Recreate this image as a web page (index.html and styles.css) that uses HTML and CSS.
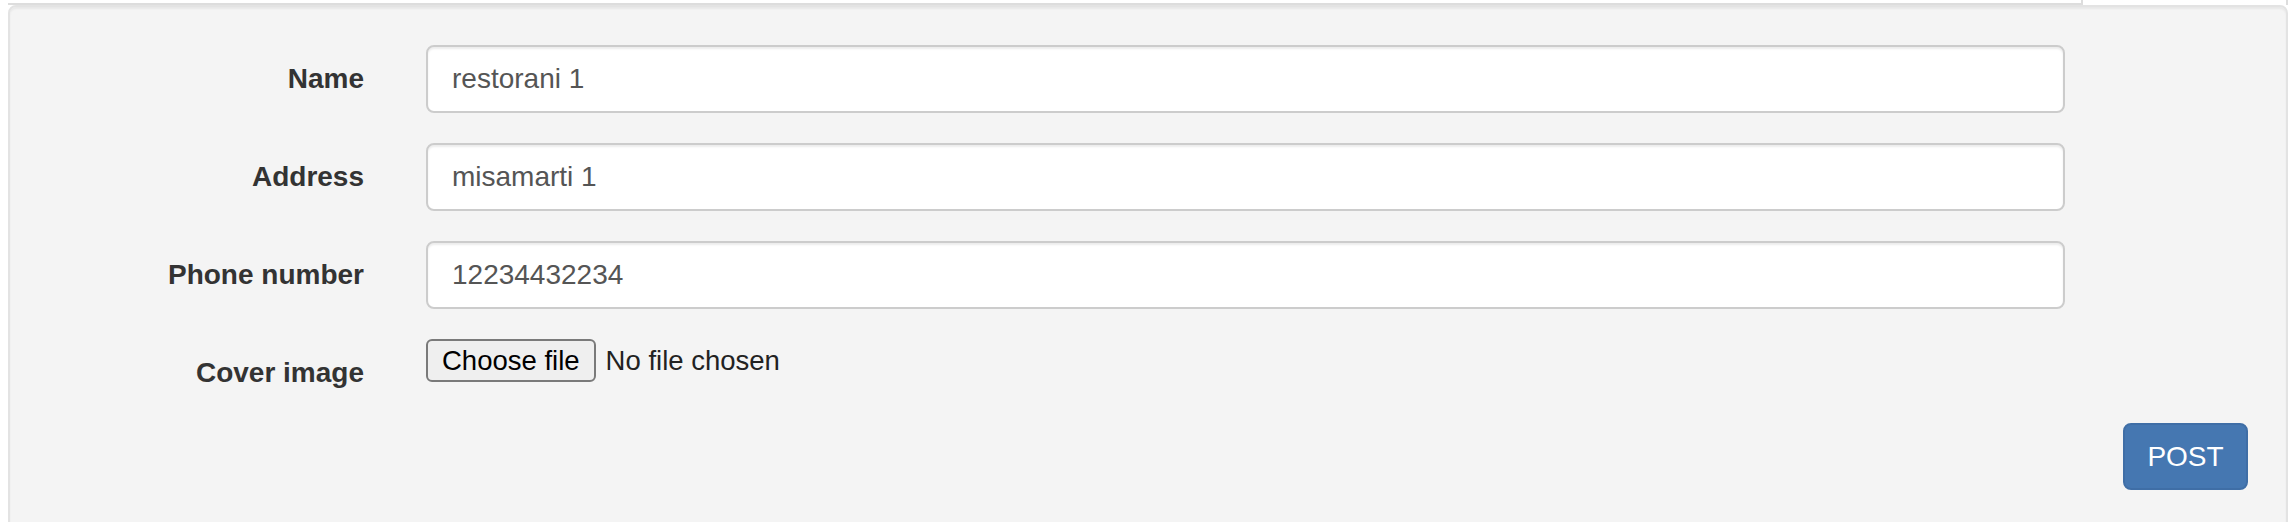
FILE: index.html
```html
<!DOCTYPE html>
<html lang="en">
<head>
<meta charset="utf-8">
<title>New restaurant</title>
<link rel="stylesheet" href="styles.css">
</head>
<body>
  <div class="tabs">
    <div class="tabs-line"></div>
    <div class="tab-active"></div>
  </div>
  <div class="well">
    <form class="form">
      <div class="form-row">
        <label class="form-label" for="name">Name</label>
        <input class="form-input" id="name" type="text" value="restorani 1">
      </div>
      <div class="form-row">
        <label class="form-label" for="address">Address</label>
        <input class="form-input" id="address" type="text" value="misamarti 1">
      </div>
      <div class="form-row">
        <label class="form-label" for="phone">Phone number</label>
        <input class="form-input" id="phone" type="text" value="12234432234">
      </div>
      <div class="form-row">
        <span class="form-label">Cover image</span>
        <label class="file">
          <span class="file-btn">Choose file</span>
          <span class="file-name">No file chosen</span>
          <input class="file-input" type="file">
        </label>
      </div>
      <div class="form-actions">
        <button class="btn-primary" type="button">POST</button>
      </div>
    </form>
  </div>
</body>
</html>
```

FILE: styles.css
```css
html, body {
  margin: 0;
  padding: 0;
  background: #ffffff;
}

body {
  margin: 0 8px;
  font-family: "Liberation Sans", Arial, Helvetica, sans-serif;
  color: #333333;
}

.tabs {
  display: flex;
  height: 5px;
}

.tabs-line {
  flex: 1;
  border-bottom: 2px solid #dddddd;
  border-right: 2px solid #dddddd;
}

.tab-active {
  width: 203px;
  background: #ffffff;
  border-right: 2px solid #dddddd;
}

.well {
  background: #f4f4f4;
  border: 2px solid #e3e3e3;
  border-radius: 8px;
  padding: 38px;
  box-shadow: inset 0 2px 2px rgba(0, 0, 0, 0.05);
  min-height: 600px;
}

.form {
  display: flex;
  flex-direction: column;
  gap: 30px;
}

.form-row {
  display: grid;
  grid-template-columns: 316px 1639px;
  column-gap: 62px;
  align-items: start;
}

.form-label {
  display: block;
  text-align: right;
  font-weight: bold;
  font-size: 28px;
  line-height: 40px;
  padding-top: 14px;
  color: #333333;
}

.form-input {
  box-sizing: border-box;
  display: block;
  width: 100%;
  height: 68px;
  margin: 0;
  padding: 12px 24px;
  font-family: "Liberation Sans", Arial, Helvetica, sans-serif;
  font-size: 28px;
  line-height: 40px;
  color: #555555;
  background: #ffffff;
  border: 2px solid #cccccc;
  border-radius: 8px;
  box-shadow: inset 0 2px 2px rgba(0, 0, 0, 0.075);
  outline: none;
}

.file {
  display: flex;
  align-items: center;
  gap: 10px;
  cursor: pointer;
}

.file-btn {
  box-sizing: border-box;
  height: 43px;
  padding: 0 14px;
  display: flex;
  align-items: center;
  font-size: 27.5px;
  color: #000000;
  background: #efefef;
  border: 2px solid #7a7a7a;
  border-radius: 6px;
}

.file-name {
  font-size: 27.5px;
  color: #222222;
}

.file-input {
  display: none;
}

.form-actions {
  display: flex;
  justify-content: flex-end;
}

.btn-primary {
  box-sizing: border-box;
  height: 67px;
  width: 125px;
  padding: 0;
  font-family: "Liberation Sans", Arial, Helvetica, sans-serif;
  font-size: 28px;
  color: #ffffff;
  background: #4577b1;
  border: 2px solid #3f6ea6;
  border-radius: 8px;
  cursor: pointer;
}
```
